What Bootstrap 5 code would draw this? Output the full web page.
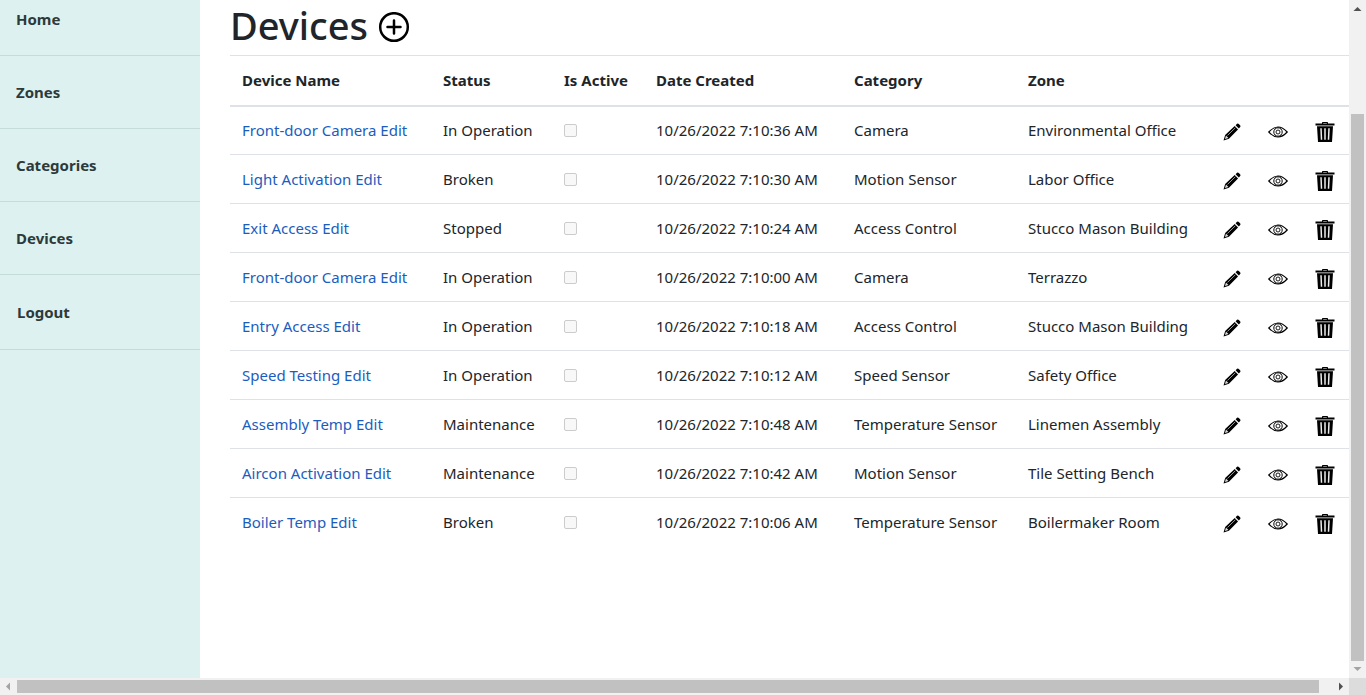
<!DOCTYPE html>
<html lang="en">
<head>
<meta charset="utf-8">
<meta name="viewport" content="width=device-width, initial-scale=1">
<title>Devices</title>
<link href="https://cdn.jsdelivr.net/npm/bootstrap@5.3.0/dist/css/bootstrap.min.css" rel="stylesheet">
<style>
body { font-family: "Noto Sans", "Open Sans", sans-serif; font-size: 15px; line-height: 24px; color: #212529; }
.shell { display: grid; grid-template: minmax(0, 1fr) 17px / minmax(0, 1fr) 17px; }
.side { width: 200px; background: #ddf2f0; }
.side a { display: block; height: 73px; padding: 24px 16px 0; border-bottom: 1px solid #c6dcdb; color: #2c3a3c; font-weight: 700; text-decoration: none; }
.side a:first-child { height: 56px; padding-top: 7px; }
.side a:last-child { height: 75px; padding: 25px 17px 0; }
.content-area { padding-left: 30px; }
.title-row { height: 55px; gap: 10px; }
.title-row h1 { font-size: 38px; line-height: 50px; font-weight: 500; }
.devices { table-layout: fixed; min-width: 1100px; }
.devices th, .devices td { height: 49px; padding: 0 12px; vertical-align: middle; white-space: nowrap; color: #212529; }
.devices thead th { border-top: 1px solid #dee2e6; border-bottom: 2px solid #dee2e6; height: 50px; }
.devices tbody tr:last-child td { border-bottom: 0; }
.devices td a { color: #1b5dbe; text-decoration: none; }
.devices input { display: block; width: 13px; height: 13px; margin: 0; appearance: none; border: 1px solid #ccc; border-radius: 2px; background: #f8f8f8; }
.devices button { display: block; padding: 4px 0 0; border: 0; background: none; color: #000; }
.devices svg, .title-row svg { display: block; }
.c-name { width: 201px; } .c-status { width: 121px; } .c-active { width: 92px; }
.c-date { width: 198px; } .c-cat { width: 174px; } .c-edit { width: 45px; }
.c-view { width: 47px; } .c-del { width: 46px; }
.track { background: #f1f1f1; }
.thumb { background: #c1c1c1; }
.thumb-y { height: 85%; margin: 0 2px; }
.thumb-x { width: 99%; height: 13px; margin-top: 2px; }
.corner { background: #dcdcdc; }
.arrow { width: 17px; height: 17px; flex: none; display: block; }
</style>
</head>
<body>
<svg class="d-none" aria-hidden="true">
  <symbol id="pencil" viewBox="0 0 20 20"><path d="M14 2.400 15.600.9q1-.8 2 .2l1.400 1.400q.9 1 .1 2l-1.500 1.500zM13 3.400l3.700 3.700L6.600 17.600.6 19.400l1.800-6z"/><path d="M3.300 14 6 16.700 2.200 17.800z" fill="#ddd"/><path d="M5 13.800 13.700 5.300" stroke="#aaa" stroke-width="1"/></symbol>
  <symbol id="eye" viewBox="0 0 20 12"><g fill="none" stroke="currentColor" stroke-width="1.200"><path d="M.8 6Q10-4 19.200 6 10 16 .8 6z"/><circle cx="10" cy="6" r="4.200" stroke-width="1"/><circle cx="10" cy="6" r="2" stroke-width=".9"/></g></symbol>
  <symbol id="trash" viewBox="0 0 20 20"><path d="M7 1.500V.8q0-.8.800-.8h4.400q.8 0 .8.800v.7h6.500v2H.5v-2zM8.200 1.500h3.600V1H8.200zM2 4.300h16L17 20H3z"/><path d="M6 6.300 6.500 17.800M10 6.300V17.800M14 6.300 13.500 17.800" stroke="#eee" stroke-width="1.500"/></symbol>
</svg>
<div class="shell vh-100 overflow-hidden">
  <div class="d-flex overflow-hidden">
    <nav class="side flex-shrink-0" aria-label="Main">
      <a href="#">Home</a><a href="#">Zones</a><a href="#">Categories</a><a href="#">Devices</a><a href="#">Logout</a>
    </nav>
    <main class="content-area flex-grow-1 overflow-hidden">
      <div class="title-row d-flex align-items-start">
        <h1 class="m-0">Devices</h1>
        <a href="#" class="text-black pt-2 mt-1" aria-label="Add device"><svg width="32" height="32" viewBox="0 0 32 32" fill="none" stroke="currentColor" stroke-width="2.500"><circle cx="16" cy="15" r="13.800"/><path d="M16 8.500v13M9.500 15h13" stroke-linecap="round"/></svg></a>
      </div>
      <table class="table devices mb-0">
        <colgroup><col class="c-name"><col class="c-status"><col class="c-active"><col class="c-date"><col class="c-cat"><col><col class="c-edit"><col class="c-view"><col class="c-del"></colgroup>
        <thead><tr><th>Device Name</th><th>Status</th><th>Is Active</th><th>Date Created</th><th>Category</th><th>Zone</th><th></th><th></th><th></th></tr></thead>
        <tbody id="rows"></tbody>
      </table>
    </main>
  </div>
  <div class="track d-flex flex-column">
    <svg class="arrow" viewBox="0 0 17 17"><path d="M4.500 11h8l-4-4z" fill="#505050"/></svg>
    <div class="flex-grow-1 d-flex flex-column justify-content-end"><div class="thumb thumb-y"></div></div>
    <svg class="arrow" viewBox="0 0 17 17"><path d="M4.500 6h8l-4 4z" fill="#a3a3a3"/></svg>
  </div>
  <div class="track d-flex">
    <svg class="arrow" viewBox="0 0 17 17"><path d="M10 4.500v8l-4-4z" fill="#a3a3a3"/></svg>
    <div class="flex-grow-1"><div class="thumb thumb-x"></div></div>
    <svg class="arrow" viewBox="0 0 17 17"><path d="M7 4.500v8l4-4z" fill="#505050"/></svg>
  </div>
  <div class="corner"></div>
</div>
<script>
const devices = [
  ["Front-door Camera Edit", "In Operation", "36", "Camera", "Environmental Office"],
  ["Light Activation Edit", "Broken", "30", "Motion Sensor", "Labor Office"],
  ["Exit Access Edit", "Stopped", "24", "Access Control", "Stucco Mason Building"],
  ["Front-door Camera Edit", "In Operation", "00", "Camera", "Terrazzo"],
  ["Entry Access Edit", "In Operation", "18", "Access Control", "Stucco Mason Building"],
  ["Speed Testing Edit", "In Operation", "12", "Speed Sensor", "Safety Office"],
  ["Assembly Temp Edit", "Maintenance", "48", "Temperature Sensor", "Linemen Assembly"],
  ["Aircon Activation Edit", "Maintenance", "42", "Motion Sensor", "Tile Setting Bench"],
  ["Boiler Temp Edit", "Broken", "06", "Temperature Sensor", "Boilermaker Room"]
];
const action = (label, id, w, h) => `<td><button type="button" aria-label="${label}"><svg width="${w}" height="${h}"><use href="#${id}"/></svg></button></td>`;
document.getElementById("rows").innerHTML = devices.map(([name, status, sec, cat, zone]) =>
  `<tr><td><a href="#">${name}</a></td><td>${status}</td><td><input type="checkbox" disabled aria-label="${name} is active"></td><td>10/26/2022 7:10:${sec} AM</td><td>${cat}</td><td>${zone}</td>` +
  action("Edit", "pencil", 18, 18) + action("View", "eye", 20, 12) + action("Delete", "trash", 20, 20) + "</tr>").join("");
</script>
<script src="https://cdn.jsdelivr.net/npm/bootstrap@5.3.0/dist/js/bootstrap.bundle.min.js"></script>
</body>
</html>
